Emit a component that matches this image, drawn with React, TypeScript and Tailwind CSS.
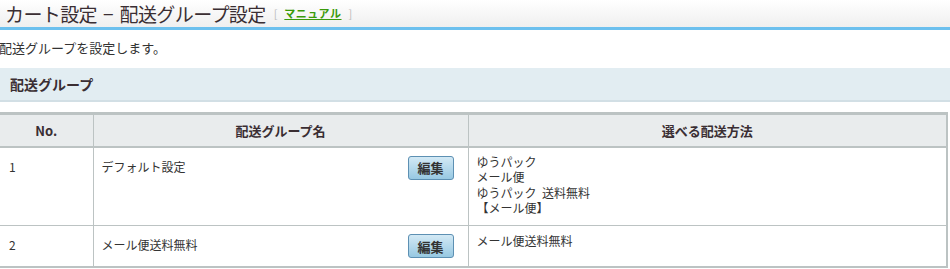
import React from "react";

const font = { fontFamily: '"Noto Sans CJK JP", "Noto Sans", sans-serif' };

function EditButton() {
  return (
    <button className="w-[46px] h-[24px] rounded-[3px] border border-[#5d90b3] bg-gradient-to-b from-[#d3e9f5] to-[#97c8e2] text-[13px] font-bold text-[#333] leading-none">
      編集
    </button>
  );
}

export default function App() {
  return (
    <div className="w-[950px] h-[269px] bg-white overflow-hidden text-[#333]" style={font}>
      <div className="h-[30px] bg-gradient-to-b from-white to-[#efefef] border-b-[3px] border-[#6cc0ee] flex items-center pl-[5px]">
        <span className="text-[19px] leading-none text-[#3a2e33] tracking-[-0.6px]">カート設定</span>
        <span className="text-[19px] leading-none text-[#3a2e33] mx-[6px]">−</span>
        <span className="text-[19px] leading-none text-[#3a2e33] tracking-[-0.6px]">配送グループ設定</span>
        <span className="ml-[8px] text-[11px] text-[#bbb]">[</span>
        <a className="ml-[7px] text-[11px] font-bold text-[#3a9a0a] underline tracking-[0.5px]">マニュアル</a>
        <span className="ml-[7px] text-[11px] text-[#bbb]">]</span>
      </div>
      <div className="text-[13px] leading-none mt-[11px] -ml-[1px]">配送グループを設定します。</div>
      <div className="mt-[14px] h-[34px] bg-[#e2edf2] border-b-2 border-[#d2dfe5] flex items-center pl-[10px] text-[14px] font-bold text-[#3a2e33]">
        配送グループ
      </div>
      <table className="mt-[10px] w-[948px] border-collapse border-t-[3px] border-r-[2px] border-[#bcc3c3] text-[12px]">
        <thead>
          <tr className="bg-[#e9eced] h-[33px] border-b-[2px] border-[#bcc3c3]">
            <th className="w-[93px] border-r border-[#bcc3c3] text-[13px] font-bold text-[#3a2e33]">No.</th>
            <th className="w-[375px] border-r border-[#bcc3c3] text-[13px] font-bold text-[#3a2e33]">配送グループ名</th>
            <th className="text-[13px] font-bold text-[#3a2e33]">選べる配送方法</th>
          </tr>
        </thead>
        <tbody>
          <tr className="h-[79px] border-b border-[#bcc3c3] align-top">
            <td className="border-r border-[#bcc3c3] pl-[9px] pt-[11px] leading-[15px]">1</td>
            <td className="border-r border-[#bcc3c3] pl-[8px] pt-[8px] pr-[14px]">
              <div className="flex justify-between">
                <span className="mt-[3px] leading-[15px]">デフォルト設定</span>
                <EditButton />
              </div>
            </td>
            <td className="pl-[8px] pt-[6px] leading-[15.5px]">
              <div>ゆうパック</div>
              <div>メール便</div>
              <div>ゆうパック&nbsp;&nbsp;送料無料</div>
              <div>【メール便】</div>
            </td>
          </tr>
          <tr className="h-[41px] border-b-[2px] border-[#bcc3c3] align-top">
            <td className="border-r border-[#bcc3c3] pl-[9px] pt-[11px] leading-[15px]">2</td>
            <td className="border-r border-[#bcc3c3] pl-[8px] pt-[8px] pr-[14px]">
              <div className="flex justify-between">
                <span className="mt-[3px] leading-[15px]">メール便送料無料</span>
                <EditButton />
              </div>
            </td>
            <td className="pl-[8px] pt-[7px] leading-[15px]">メール便送料無料</td>
          </tr>
        </tbody>
      </table>
    </div>
  );
}
